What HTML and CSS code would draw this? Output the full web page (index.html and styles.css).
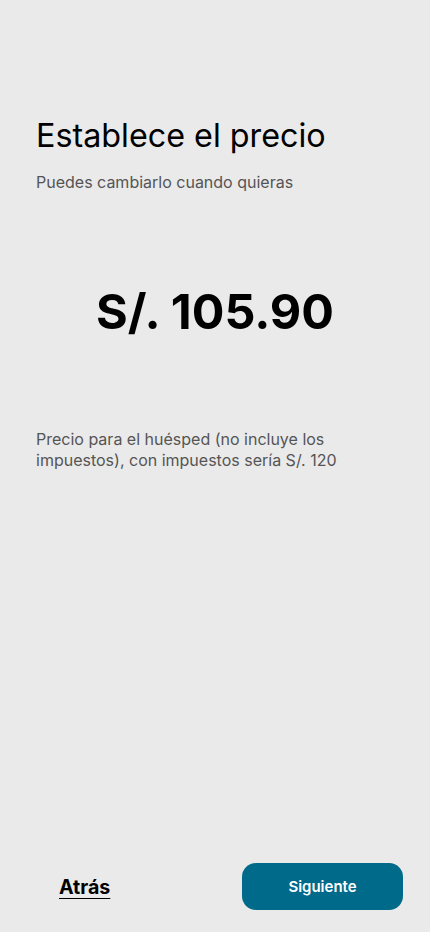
FILE: index.html
```html
<!DOCTYPE html>
<html lang="es">
<head>
<meta charset="utf-8">
<link rel="stylesheet" href="styles.css">
</head>
<body>
<div class="page">
  <main class="content">
    <h1 class="title">Establece el precio</h1>
    <p class="subtitle">Puedes cambiarlo cuando quieras</p>
    <div class="price">S/. 105.90</div>
    <p class="note">Precio para el huésped (no incluye los impuestos), con impuestos sería S/. 120</p>
  </main>
  <footer class="footer">
    <a class="back" href="#">Atrás</a>
    <button class="next">Siguiente</button>
  </footer>
</div>
</body>
</html>
```

FILE: styles.css
```css
* { box-sizing: border-box; }
html, body { margin: 0; padding: 0; }
body {
  background: #eaeaea;
  font-family: Inter, "Noto Sans", sans-serif;
  color: #000;
}
.page {
  min-height: 932px;
  display: flex;
  flex-direction: column;
}
.content {
  padding: 116px 36px 0 36px;
}
.title {
  margin: 0;
  font-size: 32.3px;
  font-weight: 400;
  line-height: 40px;
}
.subtitle {
  margin: 16px 0 0 0;
  font-size: 16px;
  line-height: 20px;
  color: #555;
}
.price {
  margin-top: 90px;
  text-align: center;
  font-size: 48.5px;
  font-weight: 700;
  line-height: 60px;
}
.note {
  margin: 87px 0 0 0;
  font-size: 16px;
  line-height: 21px;
  color: #555;
}
.footer {
  margin-top: auto;
  display: flex;
  justify-content: space-between;
  align-items: center;
  padding: 0 27px 22px 59px;
}
.back {
  color: #000;
  font-size: 19.6px;
  font-weight: 700;
  text-decoration: underline;
  text-underline-offset: 4px;
}
.next {
  width: 161px;
  height: 47px;
  border: none;
  border-radius: 14px;
  background: #006a8a;
  color: #fff;
  font-family: Inter, sans-serif;
  font-size: 15px;
  font-weight: 600;
}
```
